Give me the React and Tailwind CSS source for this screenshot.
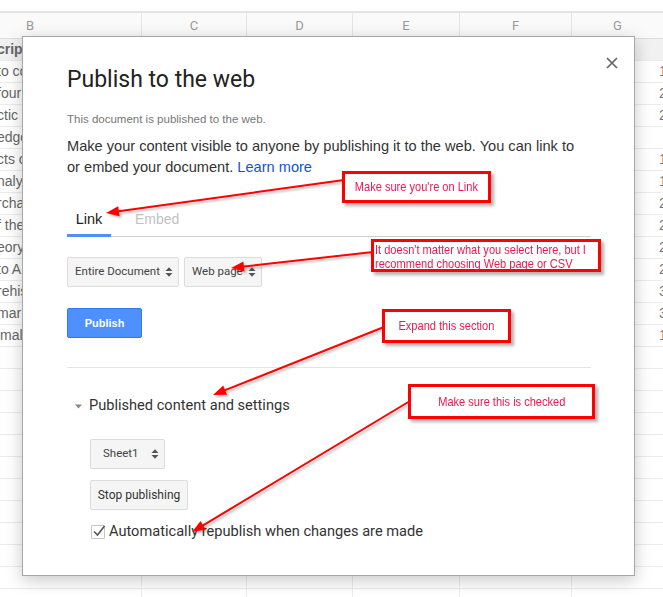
import React from "react";

const rows = [
  ["crip", ""],
  ["to co", "1"],
  ["four", "2"],
  ["ctic", "2"],
  ["edge", ""],
  ["cts o", "1"],
  ["nalys", "1"],
  ["rcha", "2"],
  ["f the", "2"],
  ["eory", "2"],
  ["to A", "2"],
  ["rehis", "3"],
  ["mar", "3"],
  ["imal", "1"],
];
while (rows.length < 26) rows.push(["", ""]);

function Sheet() {
  return (
    <div className="text-[#666]">
      <div className="h-[11px] bg-white" />
      <div className="h-[2px] bg-[#e4e4e4]" />
      {/* column letters */}
      <div className="grid grid-cols-[142px_105px_106px_107px_112px_1fr] h-[26px] bg-[#fafafa] border-b border-[#dcdcdc] font-['Roboto',sans-serif] text-[13px] text-[#9a9a9a]">
        <div className="border-r border-[#e6e6e6] pl-[26px] flex items-center">B</div>
        <div className="border-r border-[#e6e6e6] flex items-center justify-center">C</div>
        <div className="border-r border-[#e6e6e6] flex items-center justify-center">D</div>
        <div className="border-r border-[#e6e6e6] flex items-center justify-center">E</div>
        <div className="border-r border-[#e6e6e6] flex items-center justify-center">F</div>
        <div className="flex items-center justify-center">G</div>
      </div>
      {rows.map(([b, g], i) => (
        <div
          key={i}
          className={`grid grid-cols-[142px_105px_106px_107px_112px_1fr] h-[22px] border-b border-[#ececec] text-[14px] ${
            i === 0 ? "bg-[#f1f1f1] font-bold" : "bg-white"
          }`}
        >
          <div className="border-r border-[#ececec] flex items-center overflow-hidden whitespace-nowrap">
            <span className="-ml-[3px]">{b}</span>
          </div>
          <div className="border-r border-[#ececec]" />
          <div className="border-r border-[#ececec]" />
          <div className="border-r border-[#ececec]" />
          <div className="border-r border-[#ececec]" />
          <div className="flex items-center pl-[87px] whitespace-nowrap text-[#777]">{g}</div>
        </div>
      ))}
    </div>
  );
}

function Arrows() {
  return (
    <svg width="8" height="12" viewBox="0 0 8 12" className="shrink-0">
      <path d="M0.5 5L4 1.2L7.5 5Z" fill="#555" />
      <path d="M0.5 7L4 10.8L7.5 7Z" fill="#555" />
    </svg>
  );
}

function Select({ label, className }) {
  return (
    <div
      className={`flex items-center justify-between h-[30px] bg-[#f5f5f5] border border-[#dcdcdc] rounded-[2px] font-['Roboto',sans-serif] text-[11.5px] text-[#444] ${className}`}
    >
      <span className="whitespace-nowrap">{label}</span>
      <Arrows />
    </div>
  );
}

function Dialog() {
  return (
    <div className="absolute left-[22px] top-[36px] w-[613px] h-[540px] bg-white border border-[#a8a8a8] shadow-[0_4px_16px_rgba(0,0,0,0.22)]">
      <svg className="absolute left-[583px] top-[20px]" width="12" height="12" viewBox="0 0 12 12">
        <path d="M1 1L11 11M11 1L1 11" stroke="#666" strokeWidth="1.7" />
      </svg>

      <div className="pl-[44px] pr-[43px] pt-[30px]">
        <h1 className="h-[26px] leading-[26px] text-[23px] text-[#222] font-['Roboto',sans-serif]">
          Publish to the web
        </h1>
        <p className="mt-[18px] h-[16px] leading-[16px] text-[11.5px] text-[#777]">
          This document is published to the web.
        </p>
        <p className="mt-[9px] text-[14.6px] leading-[21px] text-[#333] whitespace-nowrap">
          Make your content visible to anyone by publishing it to the web. You can link to
          <br />
          or embed your document. <span className="text-[#1155cc]">Learn more</span>
        </p>

        {/* tabs */}
        <div className="mt-[32px] flex border-b border-[#cfcfcf]">
          <div className="-mb-px w-[44px] text-center leading-[18px] pb-[6px] border-b-[3px] border-[#4d90fe] text-[14.5px] text-[#222]">
            Link
          </div>
          <div className="ml-[16px] px-[8px] leading-[18px] text-[14px] text-[#c2c2c2]">Embed</div>
        </div>

        <div className="mt-[20px] flex gap-[5px]">
          <Select label="Entire Document" className="w-[112px] pl-[7px] pr-[5px]" />
          <Select label="Web page" className="w-[78px] pl-[7px] pr-[5px]" />
        </div>

        <button className="mt-[21px] block w-[75px] h-[30px] bg-[#4d90fe] border border-[#3079ed] rounded-[2px] text-white text-[11px] font-bold">
          Publish
        </button>

        <div className="mt-[29px] h-px bg-[#e5e5e5]" />

        <div className="mt-[28px] h-[20px] flex items-center font-['Roboto',sans-serif] text-[14.6px] text-[#333]">
          <svg className="ml-[8px] mr-[7px]" width="7" height="5" viewBox="0 0 7 5">
            <path d="M0 0.5H7L3.5 4.5Z" fill="#888" />
          </svg>
          Published content and settings
        </div>

        <div className="ml-[23px]">
          <Select label="Sheet1" className="mt-[23px] w-[75px] pl-[12px] pr-[5px]" />
          <button className="mt-[11px] block w-[98px] h-[30px] bg-[#f5f5f5] border border-[#dcdcdc] rounded-[2px] font-['Roboto',sans-serif] text-[12px] text-[#333]">
            Stop publishing
          </button>
          <label className="mt-[12px] h-[20px] flex items-center font-['Roboto',sans-serif] text-[14.6px] text-[#333]">
            <span className="relative ml-px mr-[4px] w-[14px] h-[14px] border border-[#c6c6c6] rounded-[1px] bg-white">
              <svg className="absolute -left-[1px] -top-[3px]" width="16" height="16" viewBox="0 0 16 16">
                <path d="M3 8.5L6.5 12L13.5 3" stroke="#555" strokeWidth="1.6" fill="none" />
              </svg>
            </span>
            Automatically republish when changes are made
          </label>
        </div>
      </div>
    </div>
  );
}

function Arrow({ x1, y1, x2, y2 }) {
  const dx = x2 - x1;
  const dy = y2 - y1;
  const len = Math.hypot(dx, dy);
  const ux = dx / len;
  const uy = dy / len;
  const hl = 13;
  const hw = 5;
  const bx = x2 - ux * hl;
  const by = y2 - uy * hl;
  const pts = `${x2},${y2} ${bx - uy * hw},${by + ux * hw} ${bx + uy * hw},${by - ux * hw}`;
  return (
    <g>
      <line x1={x1} y1={y1} x2={bx + ux * 2} y2={by + uy * 2} stroke="#ff0000" strokeWidth="2" />
      <polygon points={pts} fill="#ff0000" />
    </g>
  );
}

function Note({ className, children }) {
  return (
    <div
      className={`absolute bg-white border-[3px] border-[#ff0000] shadow-[3px_3px_3px_rgba(0,0,0,0.3)] text-[13px] leading-[14px] text-[#f2164e] ${className}`}
    >
      {children}
    </div>
  );
}

function Scaled({ children, left }) {
  return (
    <span
      className={`inline-block whitespace-nowrap scale-x-[0.85] ${left ? "origin-left" : "origin-center"}`}
    >
      {children}
    </span>
  );
}

export default function App() {
  return (
    <div className="relative w-[663px] h-[597px] overflow-hidden bg-white font-['Liberation_Sans',Arial,sans-serif]">
      <Sheet />
      <Dialog />

      <svg
        className="absolute left-0 top-0 pointer-events-none drop-shadow-[2px_2px_1px_rgba(0,0,0,0.25)]"
        width="663"
        height="597"
      >
        <Arrow x1={344} y1={180} x2={106} y2={213} />
        <Arrow x1={373} y1={252} x2={231} y2={268} />
        <Arrow x1={384} y1={327} x2={213} y2={395} />
        <Arrow x1={410} y1={401} x2={192} y2={532} />
      </svg>

      <Note className="left-[342px] top-[171px] w-[149px] h-[32px] flex items-center justify-center">
        <Scaled>Make sure you're on Link</Scaled>
      </Note>
      <Note className="left-[371px] top-[239px] w-[230px] h-[33px] pl-[1px] pt-[1px] flex flex-col">
        <Scaled left>It doesn't matter what you select here, but I</Scaled>
        <Scaled left>recommend choosing Web page or CSV</Scaled>
      </Note>
      <Note className="left-[382px] top-[309px] w-[129px] h-[34px] flex items-center justify-center">
        <Scaled>Expand this section</Scaled>
      </Note>
      <Note className="left-[408px] top-[384px] w-[187px] h-[35px] flex items-center justify-center">
        <Scaled>Make sure this is checked</Scaled>
      </Note>
    </div>
  );
}
